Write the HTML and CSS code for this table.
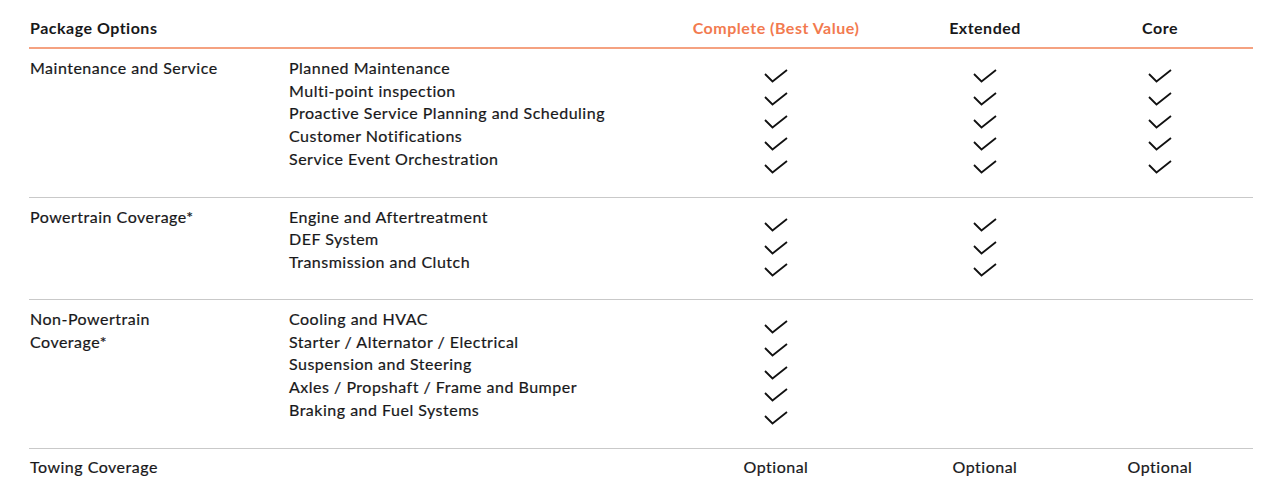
FILE: index.html
```html
<!DOCTYPE html>
<html lang="en">
<head>
<meta charset="utf-8">
<title>Package Options</title>
<link rel="stylesheet" href="styles.css">
</head>
<body>
<div class="table">
  <div class="row head">
    <div class="c-label">Package Options</div>
    <div class="c-feat"></div>
    <div class="c-plan best">Complete (Best Value)</div>
    <div class="c-plan">Extended</div>
    <div class="c-plan">Core</div>
  </div>

  <div class="row">
    <div class="c-label">Maintenance and Service</div>
    <ul class="c-feat">
      <li>Planned Maintenance</li>
      <li>Multi-point inspection</li>
      <li>Proactive Service Planning and Scheduling</li>
      <li>Customer Notifications</li>
      <li>Service Event Orchestration</li>
    </ul>
    <ul class="c-plan checks">
      <li><svg class="ck" viewBox="0 0 24 14"><polyline points="1,5 8.5,12.5 23,1"/></svg></li>
      <li><svg class="ck" viewBox="0 0 24 14"><polyline points="1,5 8.5,12.5 23,1"/></svg></li>
      <li><svg class="ck" viewBox="0 0 24 14"><polyline points="1,5 8.5,12.5 23,1"/></svg></li>
      <li><svg class="ck" viewBox="0 0 24 14"><polyline points="1,5 8.5,12.5 23,1"/></svg></li>
      <li><svg class="ck" viewBox="0 0 24 14"><polyline points="1,5 8.5,12.5 23,1"/></svg></li>
    </ul>
    <ul class="c-plan checks">
      <li><svg class="ck" viewBox="0 0 24 14"><polyline points="1,5 8.5,12.5 23,1"/></svg></li>
      <li><svg class="ck" viewBox="0 0 24 14"><polyline points="1,5 8.5,12.5 23,1"/></svg></li>
      <li><svg class="ck" viewBox="0 0 24 14"><polyline points="1,5 8.5,12.5 23,1"/></svg></li>
      <li><svg class="ck" viewBox="0 0 24 14"><polyline points="1,5 8.5,12.5 23,1"/></svg></li>
      <li><svg class="ck" viewBox="0 0 24 14"><polyline points="1,5 8.5,12.5 23,1"/></svg></li>
    </ul>
    <ul class="c-plan checks">
      <li><svg class="ck" viewBox="0 0 24 14"><polyline points="1,5 8.5,12.5 23,1"/></svg></li>
      <li><svg class="ck" viewBox="0 0 24 14"><polyline points="1,5 8.5,12.5 23,1"/></svg></li>
      <li><svg class="ck" viewBox="0 0 24 14"><polyline points="1,5 8.5,12.5 23,1"/></svg></li>
      <li><svg class="ck" viewBox="0 0 24 14"><polyline points="1,5 8.5,12.5 23,1"/></svg></li>
      <li><svg class="ck" viewBox="0 0 24 14"><polyline points="1,5 8.5,12.5 23,1"/></svg></li>
    </ul>
  </div>

  <div class="row mid">
    <div class="c-label">Powertrain Coverage*</div>
    <ul class="c-feat">
      <li>Engine and Aftertreatment</li>
      <li>DEF System</li>
      <li>Transmission and Clutch</li>
    </ul>
    <ul class="c-plan checks">
      <li><svg class="ck" viewBox="0 0 24 14"><polyline points="1,5 8.5,12.5 23,1"/></svg></li>
      <li><svg class="ck" viewBox="0 0 24 14"><polyline points="1,5 8.5,12.5 23,1"/></svg></li>
      <li><svg class="ck" viewBox="0 0 24 14"><polyline points="1,5 8.5,12.5 23,1"/></svg></li>
    </ul>
    <ul class="c-plan checks">
      <li><svg class="ck" viewBox="0 0 24 14"><polyline points="1,5 8.5,12.5 23,1"/></svg></li>
      <li><svg class="ck" viewBox="0 0 24 14"><polyline points="1,5 8.5,12.5 23,1"/></svg></li>
      <li><svg class="ck" viewBox="0 0 24 14"><polyline points="1,5 8.5,12.5 23,1"/></svg></li>
    </ul>
    <div class="c-plan"></div>
  </div>

  <div class="row">
    <div class="c-label">Non-Powertrain<br>Coverage*</div>
    <ul class="c-feat">
      <li>Cooling and HVAC</li>
      <li>Starter / Alternator / Electrical</li>
      <li>Suspension and Steering</li>
      <li>Axles / Propshaft / Frame and Bumper</li>
      <li>Braking and Fuel Systems</li>
    </ul>
    <ul class="c-plan checks">
      <li><svg class="ck" viewBox="0 0 24 14"><polyline points="1,5 8.5,12.5 23,1"/></svg></li>
      <li><svg class="ck" viewBox="0 0 24 14"><polyline points="1,5 8.5,12.5 23,1"/></svg></li>
      <li><svg class="ck" viewBox="0 0 24 14"><polyline points="1,5 8.5,12.5 23,1"/></svg></li>
      <li><svg class="ck" viewBox="0 0 24 14"><polyline points="1,5 8.5,12.5 23,1"/></svg></li>
      <li><svg class="ck" viewBox="0 0 24 14"><polyline points="1,5 8.5,12.5 23,1"/></svg></li>
    </ul>
    <div class="c-plan"></div>
    <div class="c-plan"></div>
  </div>

  <div class="row last">
    <div class="c-label">Towing Coverage</div>
    <div class="c-feat"></div>
    <div class="c-plan">Optional</div>
    <div class="c-plan">Optional</div>
    <div class="c-plan">Optional</div>
  </div>
</div>
</body>
</html>
```

FILE: styles.css
```css
html, body {
  margin: 0;
  padding: 0;
  background: #ffffff;
}

body {
  font-family: "Lato", "Liberation Sans", sans-serif;
  font-size: 16px;
  line-height: 22.75px;
  letter-spacing: 0.5px;
  color: #18181a;
  -webkit-text-stroke: 0.2px #18181a;
}

.table {
  width: 1224px;
  margin-left: 29px;
}

.row {
  display: grid;
  grid-template-columns: 260px 370px 234px 184px 166px 1fr;
  align-items: start;
  padding: 8px 0 18px;
  border-bottom: 1px solid #c9c9c9;
}

.row.head {
  padding: 17px 0 7px;
  border-bottom: 2px solid #f5a281;
  font-weight: 700;
  -webkit-text-stroke: 0;
}

.row.mid {
  padding-bottom: 17px;
}

.row.last {
  border-bottom: none;
  padding-top: 7px;
}

.c-label {
  padding-left: 1px;
}

.c-feat {
  margin: 0;
  padding: 0;
  list-style: none;
}

.c-plan {
  text-align: center;
}

.best {
  color: #f27a4f;
}

.checks {
  margin: 0;
  padding: 8px 0 0;
  list-style: none;
}

.checks li {
  height: 22.75px;
  display: flex;
  align-items: center;
  justify-content: center;
}

.ck {
  width: 24px;
  height: 14px;
  display: block;
  fill: none;
  stroke: #111111;
  stroke-width: 1.8;
  stroke-linejoin: miter;
}
```
